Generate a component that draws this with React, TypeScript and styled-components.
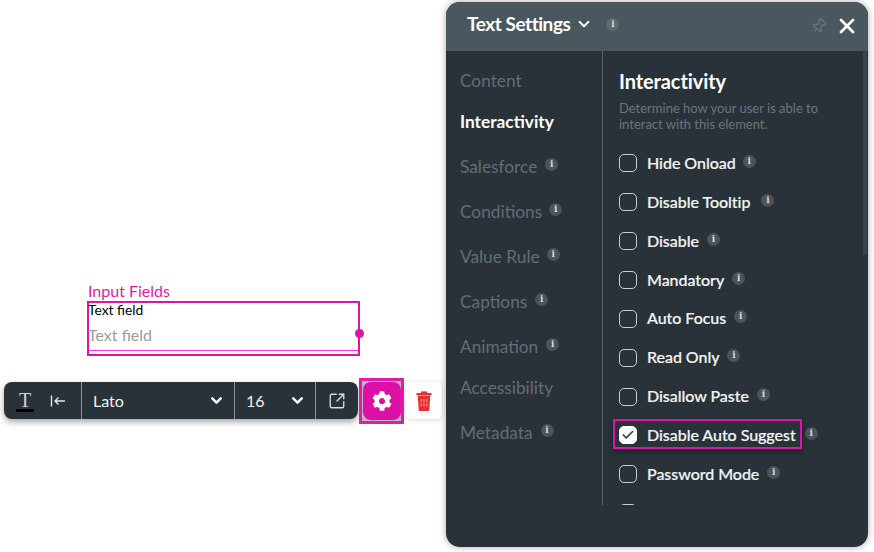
import React from "react";
import styled, { createGlobalStyle } from "styled-components";
import { ChevronDown, X, Pin, Check, SquareArrowOutUpRight } from "lucide-react";
import { FaCog } from "react-icons/fa";

const Global = createGlobalStyle`
  html, body { margin: 0; padding: 0; background: #fff; }
  body { font-family: Lato, "Liberation Sans", sans-serif; width: 874px; height: 552px; overflow: hidden; }
`;

const Page = styled.div`
  width: 874px; height: 552px; display: flex; background: #fff; overflow: hidden;
`;
const Canvas = styled.div`
  width: 446px; flex: none; padding: 281px 0 0 4px; box-sizing: border-box;
  display: flex; flex-direction: column; align-items: flex-start;
`;
const CanvasLabel = styled.div`
  margin-left: 84px; font-size: 16px; line-height: 20px; color: #e01cab;
`;
const Selection = styled.div`
  position: relative; margin-left: 83px; width: 273px; height: 55px; box-sizing: border-box;
  border: 2px solid #dd14a6; display: flex; flex-direction: column;
`;
const Handle = styled.span`
  position: absolute; right: -6px; top: 26px; width: 9px; height: 9px; border-radius: 50%; background: #dd14a6;
`;
const FieldLabel = styled.div`
  font-size: 13.8px; line-height: 14px; color: #000; margin-left: -1px;
`;
const FieldValue = styled.div`
  font-size: 16px; line-height: 18px; color: #9b9b9b; margin-top: 9px; flex: 1; border-bottom: 1px solid #f23ad6;
  margin-bottom: 3px; text-indent: -1px;
`;
const ToolRow = styled.div`
  display: flex; align-items: flex-start; margin-top: 22px; height: 46px;
`;
const Toolbar = styled.div`
  width: 354px; height: 37px; margin-top: 4px; border-radius: 8px; background: #293239; display: flex; color: #f2f2f2;
  box-shadow: 0 3px 6px rgba(0,0,0,.35);
`;
const ToolCell = styled.div<{ $w: number; $pad?: number }>`
  width: ${p => p.$w}px; flex: none; box-sizing: border-box; display: flex; align-items: center; justify-content: space-between;
  padding: 0 ${p => p.$pad ?? 12}px; border-right: 1px solid #8b9195; font-size: 16px;
  &:last-child { border-right: none; }
`;
const ToolValue = styled.span`
  margin-left: 2px;
`;
const TGlyph = styled.span`
  font-family: "Liberation Serif", serif; font-size: 20px; line-height: 18px; color: #cfd2d3;
  border-bottom: 3px solid #000; width: 18px; text-align: center; display: block; margin-top: 1px;
`;
const IndentIcon = styled.svg`
  margin-right: 3px;
`;
const GearOutline = styled.div`
  margin-left: 1px; width: 45px; height: 46px; box-sizing: border-box; border: 3px solid #e01cab; background: #b9b9b9;
  display: flex;
`;
const GearButton = styled.div`
  flex: 1; background: #dc10a6; border-radius: 8px; display: flex; align-items: center; justify-content: center;
  margin: 1px 0 1px 1px;
`;
const TrashButton = styled.div`
  margin: 4px 0 0 2px; width: 36px; height: 37px; background: #fff; border-radius: 5px;
  box-shadow: 0 1px 5px rgba(0,0,0,.15); display: flex; align-items: center; justify-content: center;
`;

const Panel = styled.section`
  width: 422px; height: 545px; margin-top: 2px; border-radius: 14px; background: #293239; overflow: hidden; flex: none;
  box-shadow: 0 0 7px rgba(0,0,0,.35); display: flex; flex-direction: column;
`;
const Header = styled.header`
  height: 49px; flex: none; box-sizing: border-box; background: #4b575e; display: flex; align-items: center; padding: 0 9px 5px 21px; color: #fff;
`;
const HeaderTitle = styled.h1`
  margin: 0; font-size: 19px; font-weight: 700; letter-spacing: -0.45px; line-height: 24px;
`;
const TitleChevron = styled(ChevronDown)`
  margin-left: 5px;
`;
const HeaderTools = styled.div`
  margin-left: auto; display: flex; align-items: center; gap: 8px; margin-top: 3px;
`;
const PinIcon = styled(Pin)`
  transform: rotate(40deg);
`;
const Info = styled.span<{ $gap?: number; $bg?: string }>`
  width: 13px; height: 13px; border-radius: 50%; background: ${p => p.$bg ?? "#4a545a"}; color: #d7dadc; flex: none;
  font-family: "DejaVu Serif", serif; font-size: 9px; line-height: 13px; text-align: center; font-weight: 700;
  margin-left: ${p => p.$gap ?? 8}px; display: inline-block;
`;
const Body = styled.div`
  flex: 1; display: flex; position: relative; min-height: 0;
`;
const Side = styled.nav`
  width: 157px; height: 454px; flex: none; box-sizing: border-box; padding: 18px 0 0 14px; border-right: 1px solid #59636a;
  display: flex; flex-direction: column;
`;
const SideItem = styled.div<{ $active?: boolean; $h: number }>`
  height: ${p => p.$h}px; display: flex; align-items: flex-start; font-size: 17.3px; line-height: 24px;
  color: ${p => p.$active ? "#fff" : "#636d73"}; font-weight: ${p => p.$active ? 700 : 400};
`;
const SideInfoWrap = styled.span`
  margin-top: 3px; display: flex;
`;
const Content = styled.div`
  flex: 1; height: 454px; overflow: hidden; padding: 17px 0 0 16px; box-sizing: border-box;
`;
const Title = styled.h2`
  margin: 0; font-size: 20px; line-height: 26px; font-weight: 700; color: #fff; letter-spacing: -0.1px;
`;
const Desc = styled.p`
  margin: 6px 0 0; font-size: 13px; line-height: 16px; color: #6b757b; width: 220px;
`;
const Options = styled.div`
  margin-top: 11px; display: flex; flex-direction: column;
`;
const Row = styled.div`
  height: 38.87px; flex: none; display: flex; align-items: center; color: #f3f4f4; font-size: 16px; font-weight: 500;
  letter-spacing: -0.04px; position: relative; -webkit-text-stroke: 0.2px #f3f4f4;
`;
const RowOutline = styled.span`
  position: absolute; left: -6px; top: 4px; width: 189px; height: 30px; box-sizing: border-box;
  border: 2.5px solid #dd14a6; box-shadow: 0 3px 6px rgba(0,0,0,.35);
`;
const Box = styled.span<{ $on?: boolean }>`
  width: 18px; height: 18px; box-sizing: border-box; border-radius: 5px; border: 1px solid ${p => p.$on ? "#fff" : "#c9cccf"};
  background: ${p => p.$on ? "#fff" : "transparent"}; margin: 2px 10px 0 0; flex: none; display: flex; align-items: center; justify-content: center;
  position: relative;
`;
const RowInfoWrap = styled.span`
  margin-top: -2px; display: flex; -webkit-text-stroke: 0;
`;
const Scrollbar = styled.div`
  position: absolute; right: 1px; top: 0; width: 4px; height: 204px; background: #3a444b;
`;

const sideItems: [string, number, boolean, number][] = [
  ["Content", 41, false, 0],
  ["Interactivity", 45, false, 0],
  ["Salesforce", 45, true, 8],
  ["Conditions", 45, true, 7],
  ["Value Rule", 45, true, 7],
  ["Captions", 45, true, 8],
  ["Animation", 41, true, 8],
  ["Accessibility", 45, false, 0],
  ["Metadata", 45, true, 8],
];

const options: [string, number][] = [
  ["Hide Onload", 7],
  ["Disable Tooltip", 11],
  ["Disable", 8],
  ["Mandatory", 8],
  ["Auto Focus", 8],
  ["Read Only", 8],
  ["Disallow Paste", 8],
  ["Disable Auto Suggest", 8],
  ["Password Mode", 8],
  ["", 8],
];

export default function App() {
  return (
    <Page>
      <Global />
      <Canvas>
        <CanvasLabel>Input Fields</CanvasLabel>
        <Selection>
          <FieldLabel>Text field</FieldLabel>
          <FieldValue>Text field</FieldValue>
          <Handle />
        </Selection>
        <ToolRow>
          <Toolbar>
            <ToolCell $w={78} $pad={12}>
              <TGlyph>T</TGlyph>
              <IndentIcon width="16" height="14" viewBox="0 0 16 14" fill="none" stroke="#e6e6e6" strokeWidth="1.4">
                <path d="M1.5 1.5v11M15 7H5M8.5 3.5 5 7l3.5 3.5" />
              </IndentIcon>
            </ToolCell>
            <ToolCell $w={153} $pad={9}>
              <ToolValue>Lato</ToolValue>
              <ChevronDown size={17} strokeWidth={3.4} color="#fff" />
            </ToolCell>
            <ToolCell $w={81} $pad={9}>
              <ToolValue>16</ToolValue>
              <ChevronDown size={17} strokeWidth={3.4} color="#fff" />
            </ToolCell>
            <ToolCell $w={42} $pad={12}>
              <SquareArrowOutUpRight size={18} strokeWidth={1.8} color="#d8dadc" />
            </ToolCell>
          </Toolbar>
          <GearOutline>
            <GearButton>
              <FaCog size={20} color="#fff" />
            </GearButton>
          </GearOutline>
          <TrashButton>
            <svg width="16" height="20" viewBox="0 0 16 20">
              <rect x="0.5" y="2" width="15" height="2.6" rx="0.6" fill="#e5322d" />
              <rect x="5" y="0.4" width="6" height="2" fill="#e5322d" />
              <path d="M1.8 5h12.4l-.9 14a1 1 0 0 1-1 .9H3.7a1 1 0 0 1-1-.9z" fill="#e5322d" />
              <path d="M5.2 8v8M8 8v8M10.8 8v8" stroke="#f6b0ad" strokeWidth="0.9" strokeDasharray="3 1.4" />
            </svg>
          </TrashButton>
        </ToolRow>
      </Canvas>
      <Panel>
        <Header>
          <HeaderTitle>Text Settings</HeaderTitle>
          <TitleChevron size={18} strokeWidth={2.4} color="#fff" />
          <Info $gap={13} $bg="#5f6a70">i</Info>
          <HeaderTools>
            <PinIcon size={16} color="#6a757b" />
            <X size={24} strokeWidth={2.8} color="#fff" />
          </HeaderTools>
        </Header>
        <Body>
          <Side>
            {sideItems.map(([label, h, info, gap]) => (
              <SideItem key={label} $h={h} $active={label === "Interactivity"}>
                {label}
                {info && <SideInfoWrap><Info $gap={gap}>i</Info></SideInfoWrap>}
              </SideItem>
            ))}
          </Side>
          <Content>
            <Title>Interactivity</Title>
            <Desc>Determine how your user is able to interact with this element.</Desc>
            <Options>
              {options.map(([label, gap], i) => {
                const on = label === "Disable Auto Suggest";
                return (
                  <Row key={i}>
                    {on && <RowOutline />}
                    <Box $on={on}>{on && <Check size={14} strokeWidth={3} color="#3b444b" />}</Box>
                    {label}
                    {label && <RowInfoWrap><Info $gap={on ? 9 : gap}>i</Info></RowInfoWrap>}
                  </Row>
                );
              })}
            </Options>
          </Content>
          <Scrollbar />
        </Body>
      </Panel>
    </Page>
  );
}
